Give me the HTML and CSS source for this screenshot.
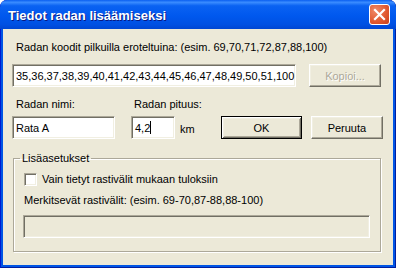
FILE: index.html
```html
<!DOCTYPE html>
<html lang="fi">
<head>
    <meta charset="UTF-8">
    <title>Tiedot radan lisäämiseksi</title>
    <link rel="stylesheet" href="styles.css">
</head>
<body>

<div class="window">
    <div class="titlebar">
        <span class="title">Tiedot radan lisäämiseksi</span>
        <button type="button" class="close">
            <svg width="13" height="13" viewBox="0 0 13 13">
                <path d="M2 2 L11 11 M11 2 L2 11" stroke="#fff" stroke-width="2.2" stroke-linecap="square"/>
            </svg>
        </button>
    </div>
    <div class="client">
        <div class="label codes-label">Radan koodit pilkuilla eroteltuina: (esim. 69,70,71,72,87,88,100)</div>
        <div class="codes-row">
            <div class="edit codes">35,36,37,38,39,40,41,42,43,44,45,46,47,48,49,50,51,100</div>
            <button type="button" class="btn copy" disabled>Kopioi...</button>
        </div>
        <div class="course-row">
            <div class="field name-field">
                <label class="label">Radan nimi:</label>
                <div class="edit name">Rata A</div>
            </div>
            <div class="field length-field">
                <label class="label">Radan pituus:</label>
                <div class="length-line">
                    <div class="edit length">4,2<span class="caret"></span></div>
                    <span class="unit">km</span>
                </div>
            </div>
            <button type="button" class="btn ok">OK</button>
            <button type="button" class="btn cancel">Peruuta</button>
        </div>
        <fieldset class="group">
            <legend>Lisäasetukset</legend>
            <div class="check-row">
                <span class="checkbox"></span>
                <span>Vain tietyt rastivälit mukaan tuloksiin</span>
            </div>
            <div class="label legs-label">Merkitsevät rastivälit: (esim. 69-70,87-88,88-100)</div>
            <div class="edit legs"></div>
        </fieldset>
    </div>
</div>

</body>
</html>
```

FILE: styles.css
```css
body {
    margin: 0;
    background: #fff;
    font-family: "Liberation Sans", Arial, sans-serif;
    font-size: 11px;
    color: #000;
}
.window {
    width: 396px;
    height: 268px;
    display: flex;
    flex-direction: column;
    background: #0055e5;
    border-radius: 7px 7px 0 0;
    box-shadow: inset 1px 0 0 #0019cf, inset -1px 0 0 #001ea0, inset 0 -1px 0 #001ea0;
    overflow: hidden;
}
.titlebar {
    height: 29px;
    display: flex;
    align-items: center;
    justify-content: space-between;
    padding: 0 6px 0 8px;
    background: linear-gradient(#0a5ff0 0%, #3a8cff 8%, #0a62f2 20%, #0058ee 55%, #0050e2 85%, #0046d2 100%);
    border-radius: 7px 7px 0 0;
}
.title {
    color: #fff;
    font-weight: bold;
    font-size: 13px;
    text-shadow: 1px 1px 0 #0a1880;
    padding-top: 1px;
}
.close {
    width: 21px;
    height: 21px;
    padding: 0;
    border: 1px solid #fff;
    border-radius: 3px;
    background: radial-gradient(circle at 30% 30%, #f08a68, #e0582f 60%, #c8401c);
    display: flex;
    align-items: center;
    justify-content: center;
}
.client {
    flex: 1;
    margin: 0 3px 3px;
    background: #ece9d8;
    padding: 12px 12px 0 9px;
}
.label {
    display: block;
    line-height: 13px;
    padding-left: 4px;
    white-space: nowrap;
}
.edit {
    box-sizing: border-box;
    height: 23px;
    background: #fff;
    border: 1px solid;
    border-color: #aca899 #fff #fff #aca899;
    box-shadow: inset 1px 1px 0 #716f64, inset -1px -1px 0 #f1efe2;
    padding: 4px 3px 0;
    line-height: 14px;
    white-space: nowrap;
    overflow: hidden;
}
.btn {
    box-sizing: border-box;
    height: 23px;
    padding: 0;
    font-family: inherit;
    font-size: 11px;
    color: #000;
    background: #ece9d8;
    border: 1px solid;
    border-color: #fff #716f64 #716f64 #fff;
    box-shadow: inset -1px -1px 0 #aca899, inset 1px 1px 0 #f1efe2;
    border-radius: 0;
    flex: none;
}
.btn:disabled {
    color: #aca899;
    text-shadow: 1px 1px 0 #fff;
}
.codes-row {
    display: flex;
    gap: 13px;
    margin-top: 10px;
}
.codes {
    width: 285px;
}
.copy {
    width: 72px;
}
.course-row {
    display: flex;
    align-items: flex-end;
    margin-top: 11px;
}
.field {
    flex: none;
}
.field .label {
    margin-bottom: 5px;
}
.name-field {
    width: 103px;
}
.length-field {
    margin-left: 16px;
}
.length-field .label {
    padding-left: 3px;
}
.length-line {
    display: flex;
    align-items: flex-end;
    gap: 5px;
}
.length {
    width: 44px;
}
.caret {
    display: inline-block;
    width: 1px;
    height: 13px;
    background: #000;
    vertical-align: -2px;
}
.unit {
    line-height: 13px;
    padding-bottom: 3px;
}
.ok {
    width: 81px;
    margin-left: 19px;
    border: 1px solid #000;
    box-shadow: inset 1px 1px 0 #fff, inset -1px -1px 0 #716f64, inset 2px 2px 0 #f1efe2, inset -2px -2px 0 #aca899;
}
.cancel {
    width: 72px;
    margin-left: 9px;
}
.group {
    margin: 13px 0 0 1px;
    width: 368px;
    box-sizing: border-box;
    padding: 0 10px 13px 9px;
    border: 1px solid #aca899;
    box-shadow: 1px 1px 0 #fff, inset 1px 1px 0 #fff;
}
.group legend {
    padding: 0 2px;
    margin-left: -3px;
    line-height: 13px;
}
.check-row {
    display: flex;
    align-items: center;
    gap: 5px;
    margin-top: 8px;
    margin-left: 1px;
    line-height: 13px;
}
.checkbox {
    box-sizing: border-box;
    width: 13px;
    height: 13px;
    background: #fff;
    border: 1px solid;
    border-color: #aca899 #fff #fff #aca899;
    box-shadow: inset 1px 1px 0 #716f64, inset -1px -1px 0 #f1efe2;
}
.legs-label {
    margin-top: 8px;
    padding-left: 1px;
}
.legs {
    margin-top: 8px;
    width: 347px;
    background: #ece9d8;
}
```
